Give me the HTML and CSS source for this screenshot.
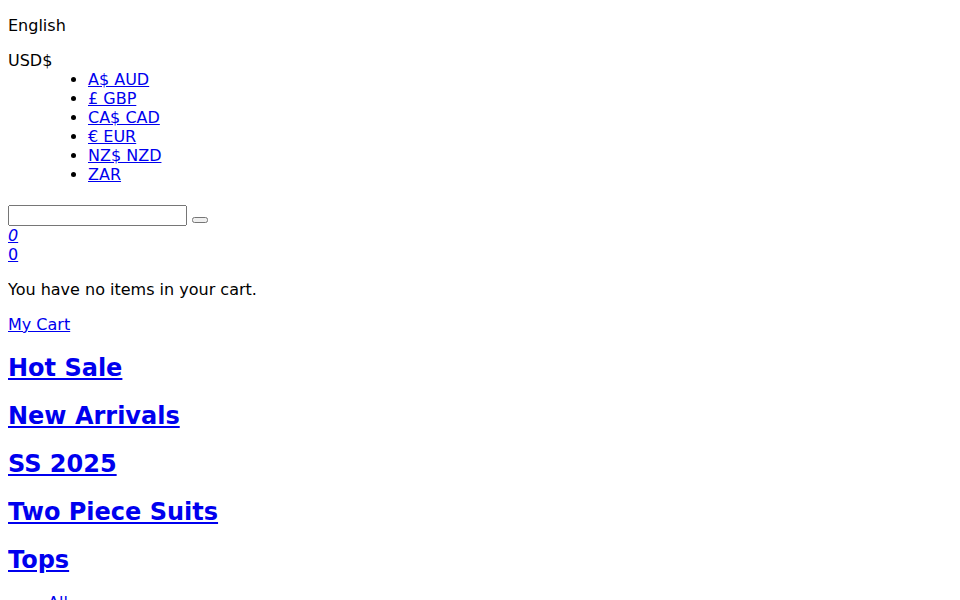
FILE: index.html
```html
<!DOCTYPE html>
<html lang="en">
<head>
<meta charset="utf-8">
<title>Shop</title>
<link rel="stylesheet" href="styles.css">
</head>
<body class="page">
<p class="lang">English</p>
<div class="currency">
  <div class="cur-label">USD$</div>
  <ul class="cur-list">
    <li><a href="#">A$ AUD</a></li>
    <li><a href="#">£ GBP</a></li>
    <li><a href="#">CA$ CAD</a></li>
    <li><a href="#">€ EUR</a></li>
    <li><a href="#">NZ$ NZD</a></li>
    <li><a href="#">ZAR</a></li>
  </ul>
</div>
<form class="search"><input class="search-input" type="text"> <button class="search-btn" type="submit"></button></form>
<div class="counter"><a href="#"><i>0</i></a></div>
<div class="counter"><a href="#">0</a></div>
<p class="cart-msg">You have no items in your cart.</p>
<p class="cart-link"><a href="#">My Cart</a></p>
<h2 class="nav-head"><a href="#">Hot Sale</a></h2>
<h2 class="nav-head"><a href="#">New Arrivals</a></h2>
<h2 class="nav-head"><a href="#">SS 2025</a></h2>
<h2 class="nav-head"><a href="#">Two Piece Suits</a></h2>
<h2 class="nav-head"><a href="#">Tops</a></h2>
<ul class="sub-list">
  <li><a href="#">All</a></li>
  <li><a href="#">Blouses</a></li>
</ul>
</body>
</html>
```

FILE: styles.css
```css
.page {
  margin: 0 8px 8px;
  font-family: "DejaVu Sans", sans-serif;
  font-size: 16px;
  color: #000;
  background: #fff;
}
.lang {
  margin: 16px 0;
}
.cur-list {
  margin: 0 0 16px;
  padding-left: 80px;
}
.search {
  margin: 0;
  padding-top: 5px;
}
.search-input {
  width: 179px;
  height: 21px;
  box-sizing: border-box;
}
.cart-msg,
.cart-link {
  margin: 16px 0;
}
.nav-head {
  font-size: 24px;
  margin: 19.92px 0;
}
.sub-list {
  margin: 16px 0;
  padding-left: 40px;
}
```
